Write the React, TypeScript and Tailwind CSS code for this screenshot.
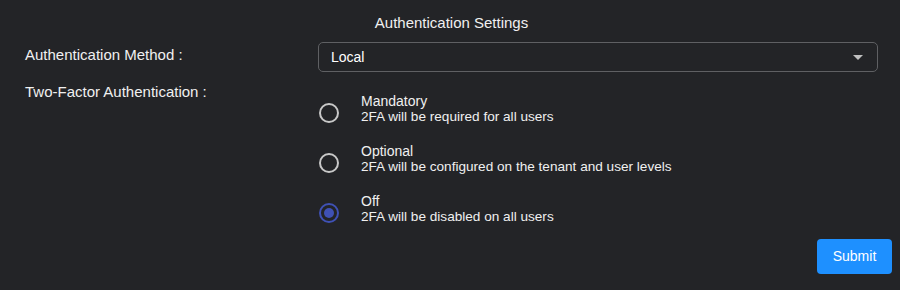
import React from "react";

const options = [
  { title: "Mandatory", desc: "2FA will be required for all users", checked: false },
  { title: "Optional", desc: "2FA will be configured on the tenant and user levels", checked: false },
  { title: "Off", desc: "2FA will be disabled on all users", checked: true },
];

function Radio({ checked }: { checked: boolean }) {
  return (
    <div
      className={`w-5 h-5 rounded-full border-2 flex items-center justify-center ${
        checked ? "border-[#3f51b5]" : "border-[#c8c8c8]"
      }`}
    >
      {checked && <div className="w-[10px] h-[10px] rounded-full bg-[#3f51b5]" />}
    </div>
  );
}

export default function App() {
  return (
    <div
      className="w-[900px] h-[290px] bg-[#232427] text-[#f0f0f0] flex flex-col"
      style={{ fontFamily: '"Liberation Sans", Arial, sans-serif' }}
    >
      <div className="pt-[15px] pl-[3px] text-center text-[15px] leading-[16px]">Authentication Settings</div>
      <div className="flex items-start mt-[11px] pl-[25px]">
        <div className="w-[293px] pt-[5px] text-[15px] leading-[16px]">Authentication Method :</div>
        <div className="w-[560px] h-[30px] border border-[#5f6063] rounded-[5px] flex items-center justify-between pl-[12px] pr-[14px] text-[14px] leading-[16px]">
          <span className="text-white">Local</span>
          <svg width="10" height="5" viewBox="0 0 10 5">
            <path d="M0 0 L10 0 L5 5 Z" fill="#c0c0c0" />
          </svg>
        </div>
      </div>
      <div className="flex pl-[25px] mt-[10px]">
        <div className="w-[293px] pt-[2px] text-[15px] leading-[16px]">Two-Factor Authentication :</div>
        <div className="flex flex-col gap-[20px] pt-[12px] leading-[15px]">
          {options.map((o) => (
            <div key={o.title} className="flex items-center">
              <div className="w-[43px] pl-[1px] pt-[8px]">
                <Radio checked={o.checked} />
              </div>
              <div className="flex flex-col">
                <span className="text-[14px]">{o.title}</span>
                <span className="text-[13.6px]">{o.desc}</span>
              </div>
            </div>
          ))}
        </div>
      </div>
      <div className="flex justify-end pr-[8px] mt-[15px]">
        <button className="w-[75px] h-[35px] rounded-[4px] bg-[#1e90ff] text-white text-[14px]">Submit</button>
      </div>
    </div>
  );
}
